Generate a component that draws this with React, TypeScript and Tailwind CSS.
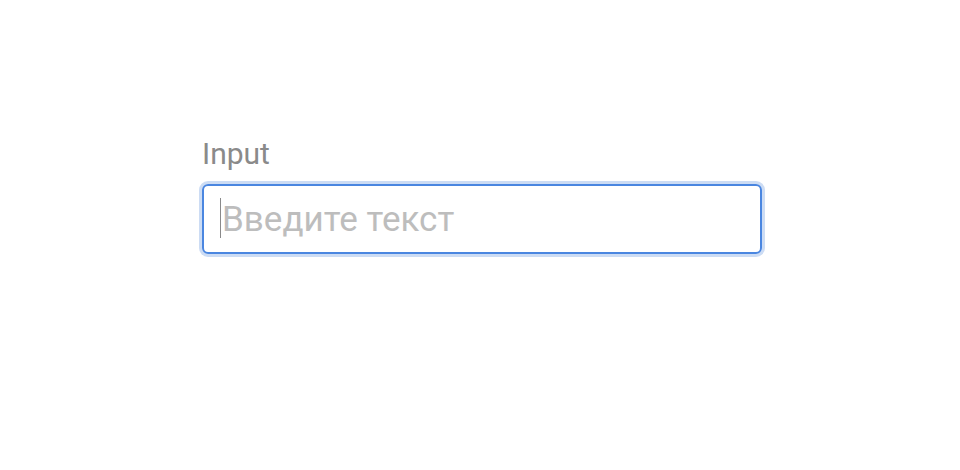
import { useEffect, useRef, useState } from 'react';

export default function App() {
  const ref = useRef<HTMLInputElement>(null);
  const [value, setValue] = useState('');
  useEffect(() => {
    ref.current?.focus();
  }, []);

  return (
    <div className="min-h-[470px] w-full bg-white flex justify-center pt-[136px] font-['Roboto',sans-serif]">
      <div className="w-[560px] flex flex-col translate-x-[2px]">
        <label htmlFor="inp" className="text-[30px] leading-[36px] text-[#8a8a8a] mb-[12px]">
          Input
        </label>
        <div className="relative">
          <input
            id="inp"
            ref={ref}
            type="text"
            value={value}
            onChange={(e) => setValue(e.target.value)}
            placeholder="Введите текст"
            className="h-[70px] w-full rounded-[6px] border-2 border-[#4a86e0] ring-[3px] ring-[#ccdcf4] px-[18px] text-[35px] text-[#333] placeholder:text-[#bdbdbd] caret-transparent outline-none"
          />
          {value === '' && (
            <span className="absolute left-[18px] top-[14px] h-[40px] w-px bg-[#8a8a8a]" />
          )}
        </div>
      </div>
    </div>
  );
}
